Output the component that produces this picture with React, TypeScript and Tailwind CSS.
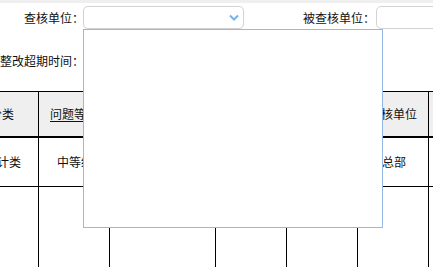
const font = { fontFamily: '"Noto Sans CJK SC", "Microsoft YaHei", sans-serif' }

type Col = { head: string; cell: string; width: string; link?: boolean }

const columns: Col[] = [
  { head: '问题分类', cell: '财务审计类', width: 'w-[96px]' },
  { head: '问题等级', cell: '中等级', width: 'w-[71px]', link: true },
  { head: '问题描述', cell: '', width: 'w-[106px]' },
  { head: '整改期限', cell: '', width: 'w-[71px]' },
  { head: '整改状态', cell: '', width: 'w-[71px]' },
  { head: '查核单位', cell: '总部', width: 'w-[71px]' },
  { head: '操作', cell: '', width: 'w-[100px]' },
]

function Chevron() {
  return (
    <svg width="10" height="7" viewBox="0 0 10 7" className="text-[#72b3ea]">
      <polyline points="1,1.5 5,5.5 9,1.5" fill="none" stroke="currentColor" strokeWidth="2" />
    </svg>
  )
}

export default function App() {
  return (
    <div className="relative h-[267px] w-[433px] overflow-hidden bg-white text-[12px] text-[#111]" style={font}>
      <div className="h-[3px] bg-[#efefef]" />

      <div className="mt-[3px] flex h-[23px] items-center">
        <label className="flex w-[84px] shrink-0 justify-end whitespace-nowrap leading-none">查核单位：</label>
        <div className="ml-[-1px] flex h-[23px] w-[161px] shrink-0 items-center justify-end rounded-[5px] border border-[#d3d3d3] pr-[4px] shadow-[0_0_1px_#e0e0e0]">
          <Chevron />
        </div>
        <label className="ml-[59px] flex w-[72px] shrink-0 justify-end whitespace-nowrap leading-none">被查核单位：</label>
        <div className="ml-[1px] h-[23px] w-[80px] shrink-0 rounded-[5px] border border-[#d3d3d3]" />
      </div>

      <div className="mt-[20px] flex h-[23px] items-center">
        <label className="flex w-[84px] shrink-0 justify-end whitespace-nowrap leading-none">整改超期时间：</label>
        <div className="ml-[-1px] h-[23px] w-[161px] shrink-0 rounded-[5px] border border-[#d3d3d3]" />
      </div>

      <div className="ml-[-58px] mt-[19px] w-[700px] border-t border-black">
        <div className="flex h-[46px] border-b-2 border-black bg-[#efefef]">
          {columns.map((c, i) => (
            <div
              key={c.head}
              className={`${c.width} flex shrink-0 items-center justify-center ${i > 0 ? 'border-l border-black' : ''}`}
            >
              <span className={c.link ? 'underline underline-offset-2' : ''}>{c.head}</span>
            </div>
          ))}
        </div>
        <div className="flex h-[49px] border-b border-black">
          {columns.map((c, i) => (
            <div
              key={c.head}
              className={`${c.width} flex shrink-0 items-center justify-center pl-[2px] ${i > 0 ? 'border-l border-black' : ''}`}
            >
              {c.cell}
            </div>
          ))}
        </div>
        <div className="flex h-[90px]">
          {columns.map((c, i) => (
            <div key={c.head} className={`${c.width} shrink-0 ${i > 0 ? 'border-l border-black' : ''}`} />
          ))}
        </div>
      </div>

      <div className="absolute left-[83px] top-[29px] h-[199px] w-[300px] border border-[#95b8e7] bg-white" />
    </div>
  )
}
